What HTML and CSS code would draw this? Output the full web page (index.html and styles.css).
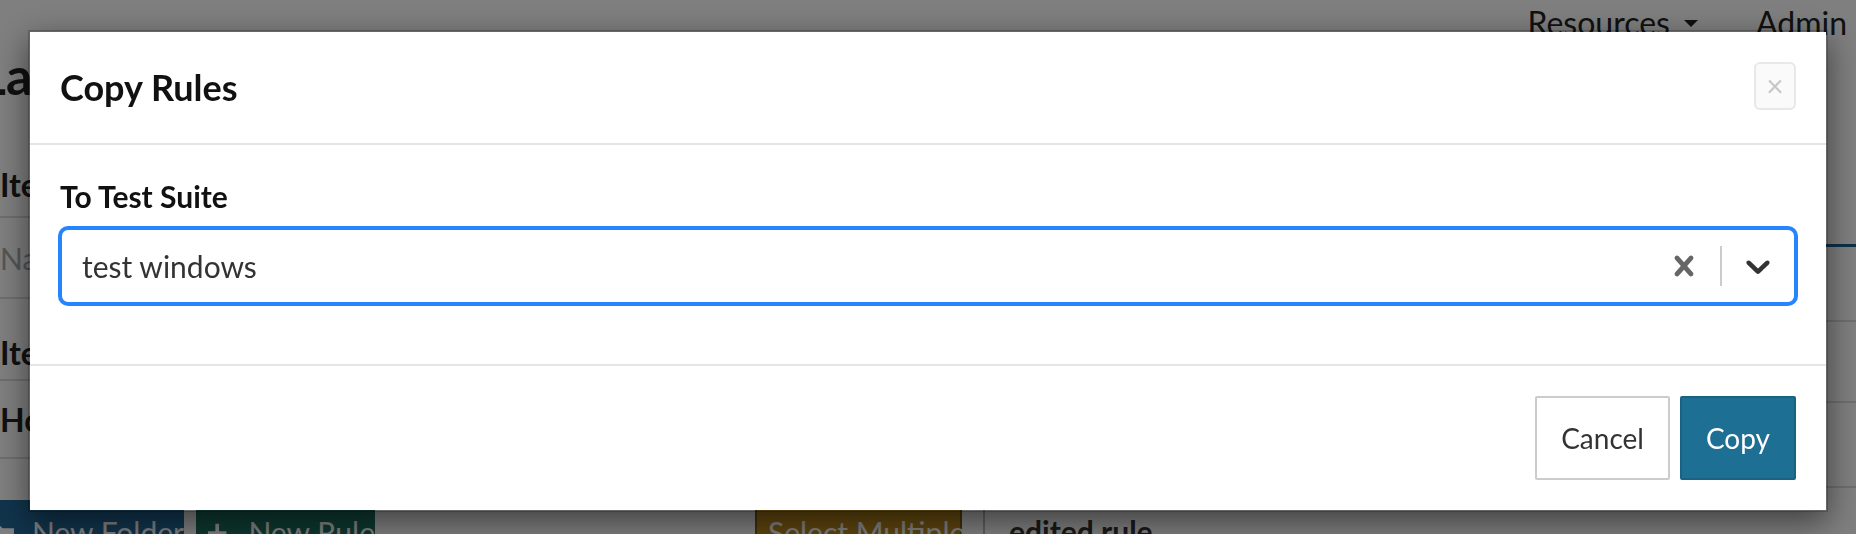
FILE: index.html
```html
<!DOCTYPE html>
<html lang="en">
<head>
<meta charset="utf-8">
<title>Copy Rules</title>
<link rel="stylesheet" href="styles.css">
</head>
<body>
<div class="page">
  <header class="topnav">
    <span class="nav-item">Resources<span class="caret"></span></span>
    <span class="nav-item">Admin</span>
  </header>
  <div class="main">
    <section class="left">
      <div class="title-row"><h1 class="page-title">Lab Rules</h1></div>
      <div class="row row-b"><span class="row-label">Items</span></div>
      <div class="row row-c"><span class="placeholder">Name</span></div>
      <div class="row row-d"><span class="row-label">Items</span></div>
      <div class="row row-e"><span class="row-label">Home</span></div>
      <div class="toolbar">
        <span class="tbtn tbtn-folder">
          <svg class="folder-icon" viewBox="0 0 26 22" width="26" height="22"><path d="M1 3h9l3 3h12v15H1z" fill="#fff"/></svg>
          New Folder
        </span>
        <span class="tbtn tbtn-rule">
          <svg class="plus-icon" viewBox="0 0 22 22" width="22" height="22"><path d="M9 1h4v8h8v4h-8v8H9v-8H1V9h8z" fill="#fff"/></svg>
          New Rule
        </span>
        <span class="tbtn tbtn-select">Select Multiple</span>
      </div>
    </section>
    <section class="right">
      <div class="rblock rblock-tabs"></div>
      <div class="rblock rblock-2"></div>
      <div class="rblock rblock-3"></div>
      <div class="rblock rblock-4"></div>
      <div class="detail-title">edited rule</div>
    </section>
  </div>
</div>

<div class="backdrop"></div>

<div class="modal" role="dialog">
  <div class="modal-header">
    <h4 class="modal-title">Copy Rules</h4>
    <button class="close" type="button">×</button>
  </div>
  <div class="modal-body">
    <div class="form-group">
      <label class="control-label">To Test Suite</label>
      <div class="select">
        <div class="select-value"><span class="single-value">test windows</span></div>
        <div class="indicator indicator-clear">
          <svg viewBox="0 0 20 20" width="40" height="40"><path fill="currentColor" d="M14.348 14.849c-0.469 0.469-1.229 0.469-1.697 0l-2.651-3.030-2.651 3.029c-0.469 0.469-1.229 0.469-1.697 0-0.469-0.469-0.469-1.229 0-1.697l2.758-3.15-2.759-3.152c-0.469-0.469-0.469-1.228 0-1.697s1.228-0.469 1.697 0l2.652 3.031 2.651-3.031c0.469-0.469 1.228-0.469 1.697 0s0.469 1.229 0 1.697l-2.758 3.152 2.758 3.15c0.469 0.469 0.469 1.229 0 1.698z"/></svg>
        </div>
        <span class="indicator-sep"></span>
        <div class="indicator indicator-drop">
          <svg viewBox="0 0 20 20" width="40" height="40"><path fill="currentColor" d="M4.516 7.548c0.436-0.446 1.043-0.481 1.576 0l3.908 3.747 3.908-3.747c0.533-0.481 1.141-0.446 1.574 0 0.436 0.445 0.408 1.197 0 1.615-0.406 0.418-4.695 4.502-4.695 4.502-0.217 0.223-0.502 0.335-0.787 0.335s-0.57-0.112-0.789-0.335c0 0-4.287-4.084-4.695-4.502s-0.436-1.17 0-1.615z"/></svg>
        </div>
      </div>
    </div>
  </div>
  <div class="modal-footer">
    <button class="btn btn-default" type="button">Cancel</button>
    <button class="btn btn-primary" type="button">Copy</button>
  </div>
</div>
</body>
</html>
```

FILE: styles.css
```css
* { box-sizing: border-box; }

html, body {
  margin: 0;
  padding: 0;
  width: 1856px;
  height: 534px;
  overflow: hidden;
  background: #fff;
  font-family: "Lato", "Open Sans", sans-serif;
  color: #222;
}

/* ---------- background page ---------- */
.page {
  display: flex;
  flex-direction: column;
  height: 534px;
  overflow: hidden;
}

.topnav {
  flex-shrink: 0;
  height: 44px;
  display: flex;
  justify-content: flex-end;
  gap: 58px;
  padding-right: 9px;
  font-size: 32px;
  line-height: 37px;
  color: #222;
}

.nav-item { display: inline-flex; align-items: center; }

.caret {
  display: inline-block;
  width: 0;
  height: 0;
  margin-left: 14px;
  margin-top: 2px;
  border-top: 7px solid #222;
  border-left: 7px solid transparent;
  border-right: 7px solid transparent;
}

.main {
  flex: 1 0 auto;
  display: flex;
}

.left {
  width: 983px;
  display: flex;
  flex-direction: column;
}

.left > *,
.right > * { flex-shrink: 0; }

.title-row {
  height: 106px;
}

.page-title {
  margin: 0 0 0 -21px;
  font-size: 52px;
  line-height: 62px;
  font-weight: 700;
  color: #222;
  white-space: nowrap;
}

.row {
  border-bottom: 2px solid #ddd;
  white-space: nowrap;
}

.row-label {
  font-size: 32px;
  line-height: 38px;
  font-weight: 700;
  color: #222;
}

.placeholder {
  font-size: 30px;
  line-height: 36px;
  color: #aaa;
}

.row-b { height: 68px; padding-top: 16px; }
.row-c { height: 81px; padding-top: 22px; }
.row-d { height: 82px; padding-top: 35px; }
.row-e { height: 78px; padding-top: 20px; }

.toolbar {
  margin-top: 41px;
  display: flex;
  gap: 12px;
  padding-right: 21px;
}

.tbtn {
  display: inline-flex;
  align-items: flex-start;
  height: 34px;
  padding-top: 14px;
  font-size: 30px;
  line-height: 36px;
  color: #fff;
  white-space: nowrap;
}

.tbtn-folder {
  width: 184px;
  background: #22699a;
  gap: 17px;
}

.folder-icon { margin-left: -10px; margin-top: 8px; }

.tbtn-rule {
  width: 179px;
  background: #1d6f60;
  padding-left: 11px;
  gap: 21px;
}

.plus-icon { margin-top: 8px; }

.tbtn-select {
  margin-left: auto;
  width: 207px;
  background: #bd8a1e;
  border: 2px solid #7e5c10;
  border-bottom: 0;
  padding-left: 11px;
  padding-top: 12px;
}

.right {
  flex: 1;
  border-left: 2px solid #bbb;
  display: flex;
  flex-direction: column;
}

.rblock { border-bottom: 2px solid #ddd; }
.rblock-tabs { height: 203px; border-bottom: 3px solid #1e6090; }
.rblock-2 { height: 75px; }
.rblock-3 { height: 81px; }
.rblock-4 { height: 85px; }

.detail-title {
  height: 46px;
  padding: 25px 0 0 24px;
  font-size: 30px;
  line-height: 36px;
  font-weight: 700;
  color: #333;
  white-space: nowrap;
}

/* ---------- backdrop + modal ---------- */
.backdrop {
  position: fixed;
  inset: 0;
  background: rgba(0, 0, 0, 0.5);
}

.modal {
  position: fixed;
  top: 30px;
  left: 28px;
  width: 1800px;
  background: #fff;
  background-clip: padding-box;
  border: 2px solid rgba(0, 0, 0, 0.2);
  box-shadow: 0 10px 30px rgba(0, 0, 0, 0.5);
  display: flex;
  flex-direction: column;
}

.modal-header {
  display: flex;
  justify-content: space-between;
  align-items: flex-start;
  padding: 30px;
  border-bottom: 2px solid #e5e5e5;
}

.modal-title {
  margin: 0;
  font-size: 36px;
  line-height: 51px;
  font-weight: 700;
  color: #111;
}

.close {
  width: 42px;
  height: 48px;
  padding: 0 0 2px 0;
  border: 2px solid #e8e8e8;
  border-radius: 6px;
  background: #fafafa;
  color: #c6c6c6;
  font-family: "Lato", sans-serif;
  font-size: 30px;
  line-height: 1;
  display: flex;
  align-items: center;
  justify-content: center;
}

.modal-body {
  padding: 30px;
}

.form-group { margin-bottom: 30px; }

.control-label {
  display: block;
  margin-bottom: 10px;
  font-size: 30px;
  line-height: 43px;
  font-weight: 700;
  color: #111;
}

.select {
  display: flex;
  align-items: stretch;
  height: 76px;
  border: 2px solid #2684ff;
  box-shadow: 0 0 0 2px #2684ff;
  border-radius: 8px;
  background: #fff;
}

.select-value {
  flex: 1;
  display: flex;
  align-items: center;
  padding: 4px 16px;
}

.single-value {
  margin-left: 4px;
  font-size: 30px;
  line-height: 36px;
  color: #333;
}

.indicator {
  display: flex;
  align-items: center;
  padding: 16px;
}

.indicator-clear { color: #666; }
.indicator-drop { color: #333; }

.indicator-sep {
  width: 2px;
  margin: 16px 0;
  background: #ccc;
}

.modal-footer {
  display: flex;
  justify-content: flex-end;
  gap: 10px;
  padding: 30px;
  border-top: 2px solid #e5e5e5;
}

.btn {
  height: 84px;
  padding: 0 24px;
  border: 2px solid;
  border-radius: 2px;
  font-family: "Lato", sans-serif;
  font-size: 28px;
  line-height: 40px;
}

.btn-default {
  background: #fff;
  border-color: #ccc;
  color: #333;
}

.btn-primary {
  background: #1e6f94;
  border-color: #1b6184;
  color: #fff;
}
```
